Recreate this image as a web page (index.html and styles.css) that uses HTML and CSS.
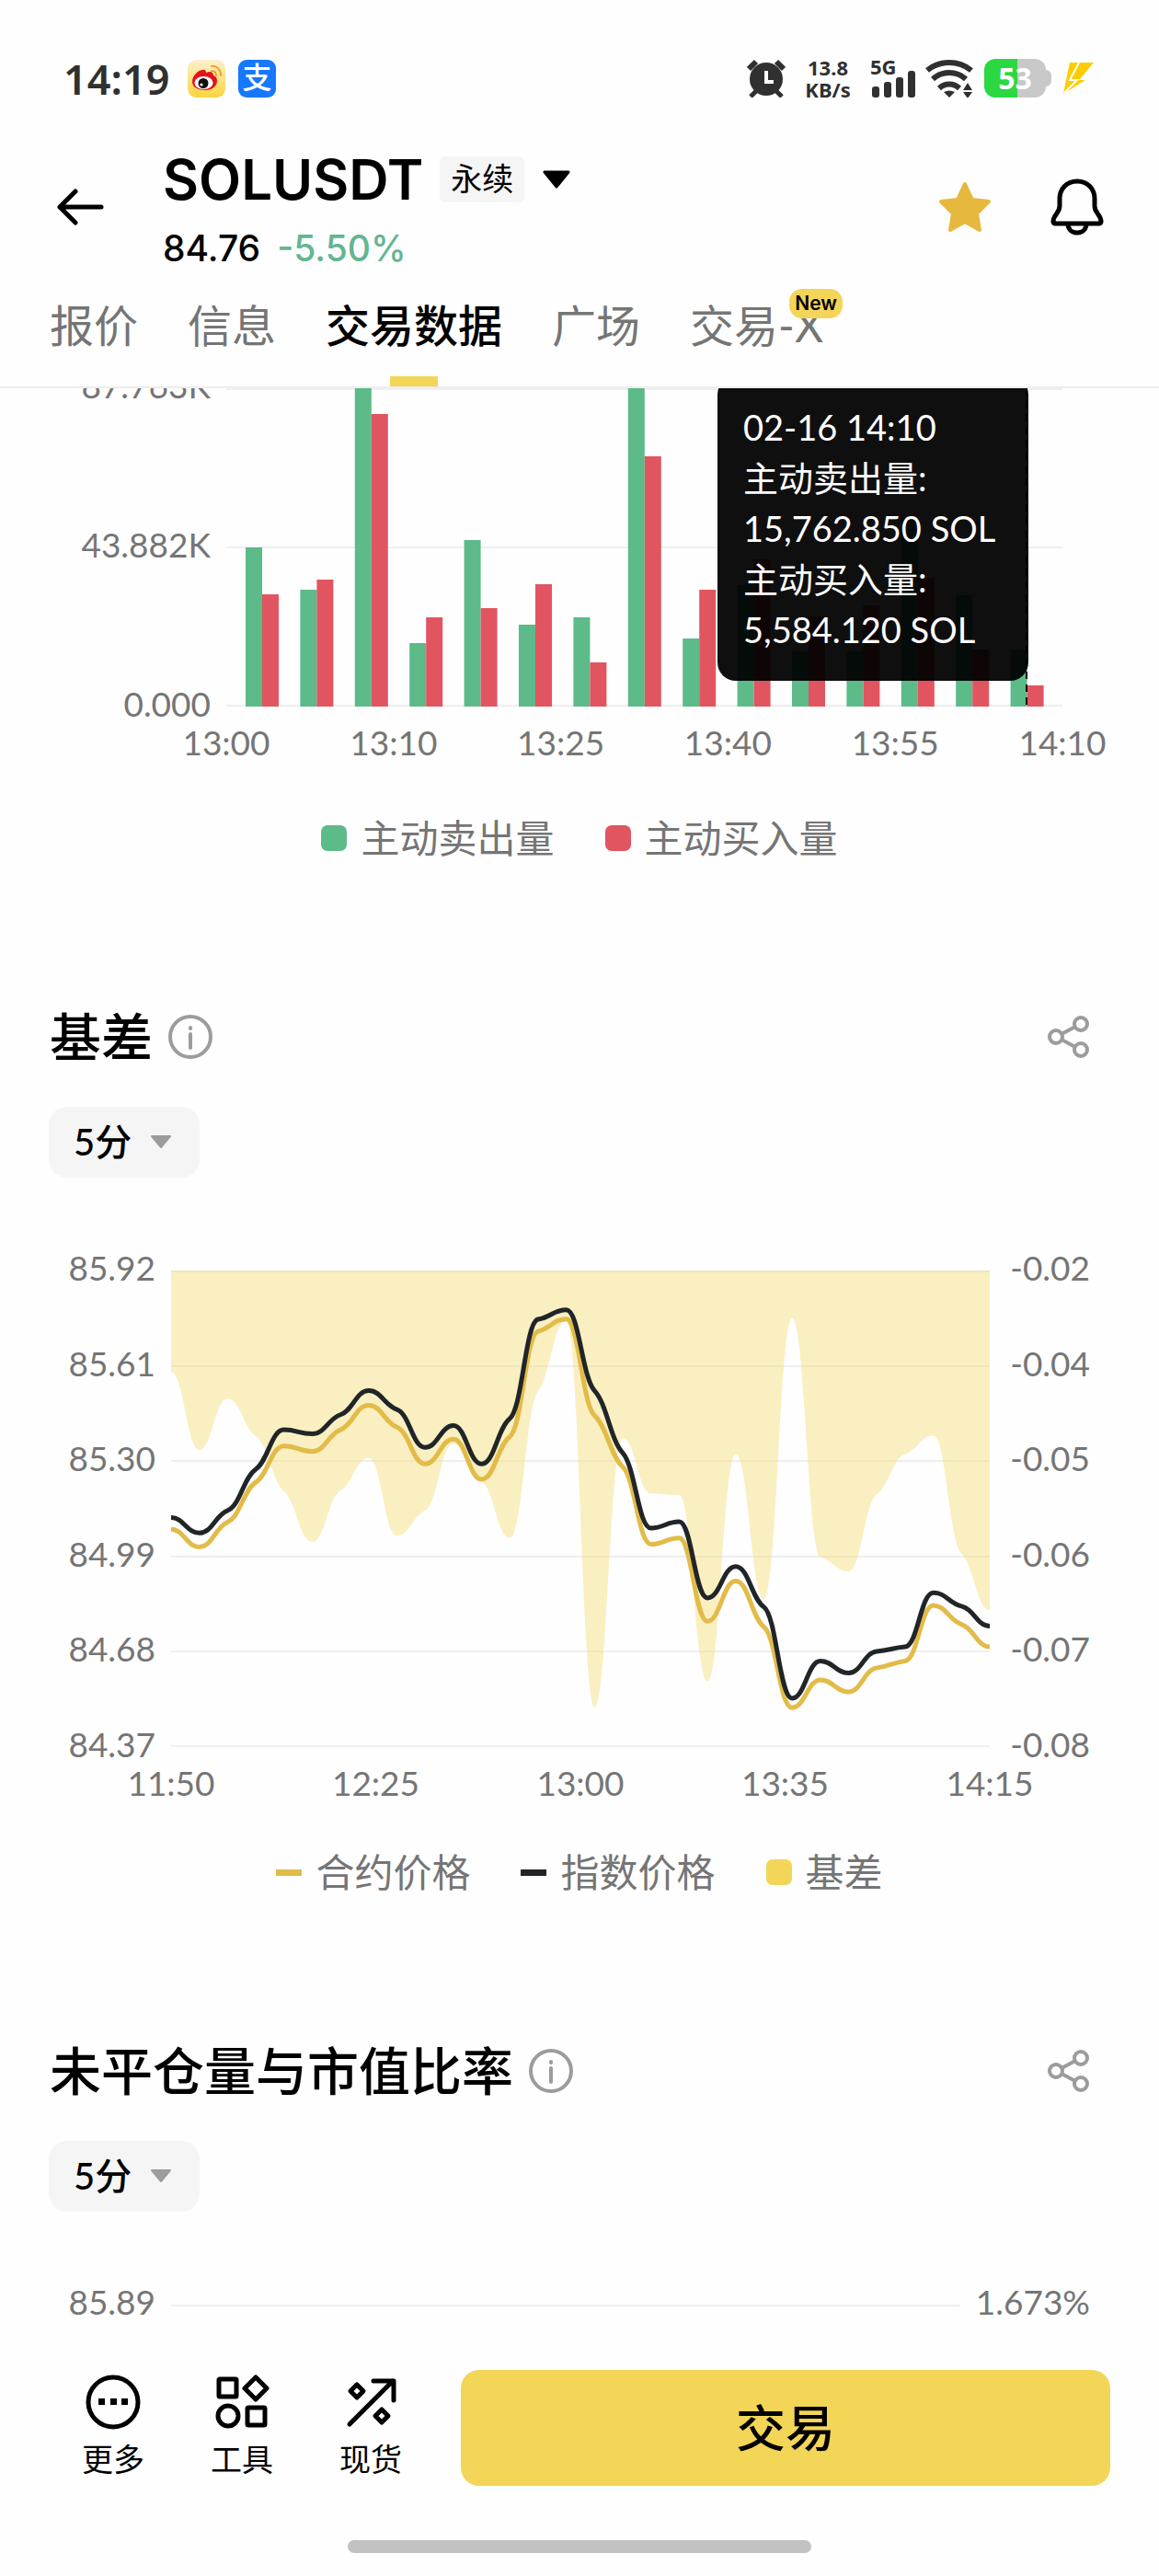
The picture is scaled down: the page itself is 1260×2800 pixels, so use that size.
FILE: index.html
```
<!DOCTYPE html>
<html lang="zh-CN">
<head>
    <meta charset="UTF-8">
    <meta name="viewport" content="width=device-width, initial-scale=1.0">
    <title>SOLUSDT 永续</title>
    <link rel="stylesheet" href="styles.css">
</head>
<body>
    <div class="status-bar">
        <span class="clock">14:19</span>
        <svg class="app-icon" viewBox="0 0 41 41" width="41" height="41">
            <defs>
                <linearGradient id="weiboBg" x1="0" y1="0" x2="0" y2="1">
                    <stop offset="0" stop-color="#fdf0cf"/>
                    <stop offset="1" stop-color="#fbd53c"/>
                </linearGradient>
            </defs>
            <rect width="41" height="41" rx="9" fill="url(#weiboBg)"/>
            <path d="M5 24c0-6 5-12 11-13 3-1 4 1 4 3 4-2 8-1 8 3 3 1 4 3 4 6 0 6-6 10-13 10S5 30 5 24z" fill="#e1141d"/>
            <ellipse cx="17.500" cy="25" rx="10" ry="7" fill="#fff"/>
            <circle cx="17" cy="25.500" r="5.500" fill="#111"/>
            <circle cx="15" cy="27" r="1.600" fill="#fff"/>
            <path d="M26 12c3 0 5 2 5 5M26 7c6-1 10 4 10 10" fill="none" stroke="#eea02a" stroke-width="2" stroke-linecap="round"/>
        </svg>
        <span class="app-icon app-pay">支</span>
        <div class="status-right">
            <svg viewBox="0 0 42 42" width="42" height="42">
                <g stroke="#303030" fill="none">
                    <path d="M2 11l8-8M40 11l-8-8" stroke-width="6"/>
                    <path d="M4 41l8-8M38 41l-8-8" stroke-width="5"/>
                </g>
                <circle cx="21" cy="22" r="18" fill="#303030"/>
                <path d="M21 13v12h8" stroke="#fff" stroke-width="4" fill="none"/>
            </svg>
            <span class="net">13.8<br>KB/s</span>
            <svg class="signal" viewBox="0 0 50 42" width="50" height="42" fill="#303030">
                <text x="0" y="17">5G</text>
                <rect x="2" y="30" width="8" height="12" rx="3"/>
                <rect x="15" y="25" width="8" height="17" rx="3"/>
                <rect x="28" y="20" width="8" height="22" rx="3"/>
                <rect x="41" y="13" width="8" height="29" rx="3"/>
            </svg>
            <svg viewBox="0 0 54 42" width="54" height="42">
                <g fill="none" stroke="#303030" stroke-width="6">
                    <path d="M2 12.500a38 38 0 0 1 48 0"/>
                    <path d="M8 22a27 27 0 0 1 36 0"/>
                    <path d="M15 32a16 16 0 0 1 22 0"/>
                </g>
                <path d="M39 44V25h14v19z" fill="#fefefe"/>
                <path d="M20 36q6-3 12 0l-6 6zM41 34l5-8 5 8zM41 36l5 7 5-7z" fill="#303030"/>
            </svg>
            <span class="battery">53</span>
            <svg viewBox="0 0 35 34" width="35" height="34">
                <path d="M8 0h26L18 19h7L1 34l3-15z" fill="#fc0"/>
                <path d="M18 0L8 19h8L2 33" fill="none" stroke="#fff" stroke-width="2"/>
            </svg>
        </div>
    </div>

    <header class="header">
        <button class="icon-button" aria-label="返回">
            <svg viewBox="0 0 51 40" width="51" height="40">
                <path d="M48 20H3M20 3L3 20l17 17" fill="none" stroke="#000" stroke-width="5" stroke-linecap="round" stroke-linejoin="round"/>
            </svg>
        </button>
        <div class="pair">
            <div class="pair-row">
                <h1>SOLUSDT</h1>
                <span class="tag">永续</span>
                <svg viewBox="0 0 30 20" width="30" height="20"><path d="M2 2h26L15 18z" stroke="#000" stroke-width="3" stroke-linejoin="round"/></svg>
            </div>
            <div class="price-row">
                <span>84.76</span>
                <span class="change">-5.50%</span>
            </div>
        </div>
        <button class="icon-button" aria-label="收藏">
            <svg viewBox="0 0 58 58" width="58" height="58">
                <path d="M29 4l8 17 18 2-13 13 3 18-16-9-16 9 3-18L3 23l18-2z" fill="#e6b93e" stroke="#e6b93e" stroke-width="4" stroke-linejoin="round"/>
            </svg>
        </button>
        <button class="icon-button" aria-label="提醒">
            <svg viewBox="0 0 58 62" width="58" height="62">
                <g fill="none" stroke="#000" stroke-width="5" stroke-linejoin="round">
                    <path d="M29 3C17 3 10 12 10 22v8c0 8-7 9-7 17 0 1 1 2 2 2h48c1 0 2-1 2-2 0-8-7-9-7-17v-8C48 12 41 3 29 3z"/>
                    <path d="M19 49c0 6 4 10 10 10s10-4 10-10"/>
                </g>
            </svg>
        </button>
    </header>

    <nav class="tabs">
        <a href="#">报价</a>
        <a href="#">信息</a>
        <a href="#" class="active">交易数据</a>
        <a href="#">广场</a>
        <a href="#">交易-X<span class="badge">New</span></a>
    </nav>

    <main class="content">
        <section>
            <div class="chart chart-volume">
                <div class="axis axis-left">
                    <span>87.763K</span><span>43.882K</span><span>0.000</span>
                </div>
                <div class="plot">
                    <div class="grid"><i></i><i></i><i></i></div>
                    <svg class="layer" id="volumeChart" viewBox="0 0 909 346" preserveAspectRatio="none"></svg>
                    <div class="tooltip">
                        02-16 14:10<br>
                        主动卖出量:<br>
                        15,762.850 SOL<br>
                        主动买入量:<br>
                        5,584.120 SOL
                    </div>
                </div>
                <div class="axis-x">
                    <span>13:00</span><span>13:10</span><span>13:25</span><span>13:40</span><span>13:55</span><span>14:10</span>
                </div>
            </div>
            <div class="legend">
                <span><i class="swatch green"></i>主动卖出量</span>
                <span><i class="swatch red"></i>主动买入量</span>
            </div>
        </section>

        <section class="section">
            <div class="section-head">
                <h2>基差</h2>
                <svg class="info" viewBox="0 0 48 48" width="48" height="48">
                    <circle cx="24" cy="24" r="22"/>
                    <path d="M24 21v15M24 14v1"/>
                </svg>
                <button class="icon-button share" aria-label="分享">
                    <svg viewBox="0 0 46 46" width="46" height="46">
                        <circle cx="9" cy="23" r="7"/><circle cx="36" cy="9" r="7"/><circle cx="36" cy="37" r="7"/>
                        <path d="M15 20l15-8M15 26l15 8"/>
                    </svg>
                </button>
            </div>
            <div class="period">
                <select aria-label="基差周期"><option>5分</option></select>
                <svg viewBox="0 0 24 16" width="24" height="16"><path d="M2 2h20L12 14z"/></svg>
            </div>
            <div class="chart chart-basis">
                <div class="axis axis-left">
                    <span>85.92</span><span>85.61</span><span>85.30</span><span>84.99</span><span>84.68</span><span>84.37</span>
                </div>
                <div class="plot">
                    <div class="grid"><i></i><i></i><i></i><i></i><i></i><i></i></div>
                    <svg class="layer" id="basisChart" viewBox="0 0 890 518" preserveAspectRatio="none"></svg>
                </div>
                <div class="axis axis-right">
                    <span>-0.02</span><span>-0.04</span><span>-0.05</span><span>-0.06</span><span>-0.07</span><span>-0.08</span>
                </div>
                <div class="axis-x">
                    <span>11:50</span><span>12:25</span><span>13:00</span><span>13:35</span><span>14:15</span>
                </div>
            </div>
            <div class="legend">
                <span><i class="dash gold"></i>合约价格</span>
                <span><i class="dash dark"></i>指数价格</span>
                <span><i class="swatch yellow"></i>基差</span>
            </div>
        </section>

        <section class="section">
            <div class="section-head">
                <h2>未平仓量与市值比率</h2>
                <svg class="info" viewBox="0 0 48 48" width="48" height="48">
                    <circle cx="24" cy="24" r="22"/>
                    <path d="M24 21v15M24 14v1"/>
                </svg>
                <button class="icon-button share" aria-label="分享">
                    <svg viewBox="0 0 46 46" width="46" height="46">
                        <circle cx="9" cy="23" r="7"/><circle cx="36" cy="9" r="7"/><circle cx="36" cy="37" r="7"/>
                        <path d="M15 20l15-8M15 26l15 8"/>
                    </svg>
                </button>
            </div>
            <div class="period">
                <select aria-label="比率周期"><option>5分</option></select>
                <svg viewBox="0 0 24 16" width="24" height="16"><path d="M2 2h20L12 14z"/></svg>
            </div>
            <div class="chart chart-ratio">
                <div class="axis axis-left"><span>85.89</span></div>
                <div class="plot"><div class="grid"><i></i></div></div>
                <div class="axis axis-right"><span>1.673%</span></div>
            </div>
        </section>
    </main>

    <footer class="bottom-bar">
        <div class="actions">
            <a href="#" class="action">
                <svg viewBox="0 0 60 60" width="60" height="60">
                    <circle cx="30" cy="30" r="27"/>
                    <path class="solid" d="M14 26h7v7h-7zM27 26h7v7h-7zM39 26h7v7h-7z"/>
                </svg>
                更多
            </a>
            <a href="#" class="action">
                <svg viewBox="0 0 60 60" width="60" height="60">
                    <rect x="5" y="5" width="19" height="19" rx="1"/>
                    <path d="M45 3l12 12-12 12-12-12z"/>
                    <circle cx="15" cy="45" r="11"/>
                    <rect x="36" y="36" width="19" height="19" rx="1"/>
                </svg>
                工具
            </a>
            <a href="#" class="action">
                <svg viewBox="0 0 60 60" width="60" height="60">
                    <path d="M7 54L54 7M33 7h22v21"/>
                    <path d="M15 11l7 7-7 7-7-7zM42 38l7 7-7 7-7-7z"/>
                </svg>
                现货
            </a>
            <button class="trade">交易</button>
        </div>
        <div class="home-indicator"></div>
    </footer>

    <script src="charts.js"></script>
</body>
</html>
```
FILE: styles.css
```
* {
    box-sizing: border-box;
}
body {
    margin: 0;
    height: 100vh;
    display: flex;
    flex-direction: column;
    overflow: hidden;
    background-color: #fefefe;
    color: #000;
    font-family: Lato, "Noto Sans CJK SC", sans-serif;
}
svg {
    display: block;
    flex: none;
}
a {
    color: inherit;
    text-decoration: none;
}
h1, h2 {
    margin: 0;
}
button {
    font-family: inherit;
    border: none;
    cursor: pointer;
}
.icon-button {
    padding: 0;
    background: none;
}

/* status bar */
.status-bar {
    display: flex;
    align-items: center;
    height: 150px;
    padding: 20px 70px 0 69px;
    color: #303030;
}
.clock {
    width: 135px;
    font-size: 45px;
    font-weight: 600;
    font-family: "Noto Sans", sans-serif;
}
.app-icon {
    width: 41px;
    height: 41px;
    margin-right: 14px;
    border-radius: 9px;
}
.app-pay {
    background-color: #1677ff;
    color: #fff;
    font-size: 32px;
    font-weight: 500;
    line-height: 38px;
    text-align: center;
}
.status-right {
    display: flex;
    align-items: center;
    gap: 10px;
    margin-left: auto;
}
.net {
    width: 52px;
    margin: 0 10px;
    font-family: "Noto Sans", sans-serif;
    font-size: 22px;
    font-weight: 700;
    line-height: 24px;
    text-align: center;
}
.signal {
    overflow: visible;
}
.signal text {
    font-family: "Noto Sans", sans-serif;
    font-size: 22px;
    font-weight: 700;
}
.battery {
    position: relative;
    width: 67px;
    height: 42px;
    margin-right: 8px;
    border-radius: 12px;
    background: linear-gradient(to right, #2bd841 54%, #c8c8c8 54%);
    color: #fff;
    font-family: "Noto Sans", sans-serif;
    font-size: 32px;
    font-weight: 700;
    line-height: 42px;
    text-align: center;
}
.battery::after {
    content: "";
    position: absolute;
    top: 12px;
    right: -6px;
    width: 7px;
    height: 18px;
    border-radius: 0 6px 6px 0;
    background-color: #c8c8c8;
}

/* header */
.header {
    display: flex;
    align-items: center;
    gap: 64px;
    height: 150px;
    padding: 0 60px 0 62px;
}
.pair {
    flex: 1;
    padding-top: 10px;
    font-family: Inter, "Noto Sans CJK SC", sans-serif;
}
.pair-row {
    display: flex;
    align-items: center;
    gap: 18px;
    height: 60px;
}
.pair-row h1 {
    font-size: 60px;
    font-weight: 600;
    line-height: 60px;
}
.tag {
    margin-right: 2px;
    padding: 0 12px;
    border-radius: 6px;
    background-color: #f5f5f5;
    font-size: 34px;
    line-height: 50px;
}
.price-row {
    display: flex;
    gap: 18px;
    margin-top: 20px;
    font-size: 39px;
    font-weight: 500;
    line-height: 50px;
}
.change {
    color: #65b591;
}

/* tabs */
.tabs {
    display: flex;
    gap: 54px;
    height: 122px;
    padding: 0 54px;
    border-bottom: 2px solid #ededed;
    color: #757575;
    font-size: 48px;
    line-height: 108px;
}
.tabs a {
    position: relative;
}
.tabs .active {
    color: #000;
    font-weight: 500;
}
.tabs .active::after {
    content: "";
    position: absolute;
    bottom: 0;
    left: 50%;
    width: 52px;
    height: 11px;
    margin-left: -26px;
    background-color: #f3d557;
}
.badge {
    position: absolute;
    top: 14px;
    left: 108px;
    width: 58px;
    border-radius: 14px;
    background-color: #f3d557;
    color: #000;
    font-family: Inter, sans-serif;
    font-size: 21px;
    font-weight: 600;
    line-height: 32px;
    text-align: center;
}

/* content */
.content {
    flex: 1;
    min-height: 0;
    overflow: hidden;
}
.section {
    margin-top: 146px;
}
.section-head {
    display: flex;
    align-items: center;
    gap: 17px;
    height: 80px;
    padding: 0 75px 0 54px;
}
.section-head h2 {
    font-size: 56px;
    font-weight: 500;
    line-height: 80px;
}
.info {
    fill: none;
    stroke: #9c9c9c;
    stroke-width: 4;
    stroke-linecap: round;
}
.share {
    margin-left: auto;
}
.share svg {
    fill: none;
    stroke: #9c9c9c;
    stroke-width: 4;
}
.period {
    position: relative;
    width: 164px;
    margin: 36px 0 0 53px;
}
.period select {
    appearance: none;
    width: 100%;
    height: 77px;
    padding: 0 27px 2px;
    border: none;
    border-radius: 20px;
    background-color: #f5f5f5;
    color: #000;
    font-family: inherit;
    font-size: 40px;
    font-weight: 500;
}
.period svg {
    position: absolute;
    top: 30px;
    right: 30px;
    fill: #9c9c9c;
    stroke: #9c9c9c;
    stroke-width: 2;
    stroke-linejoin: round;
    pointer-events: none;
}

/* charts */
.chart {
    display: grid;
    column-gap: 17px;
    color: #757575;
    font-size: 37px;
}
.chart-volume {
    grid-template: 346px auto / 229px 1fr;
    padding: 0 105px 7px 0;
}
.chart-basis {
    grid-template: 518px auto / 169px 1fr 92px;
    margin-top: 101px;
    padding-right: 75px;
}
.chart-ratio {
    grid-template: 518px auto / 169px 1fr auto;
    margin-top: 101px;
    padding-right: 75px;
}
.axis {
    display: flex;
    flex-direction: column;
    justify-content: space-between;
    margin: -23px 0 -17px;
    line-height: 40px;
    text-align: right;
}
.plot {
    position: relative;
}
.grid {
    display: flex;
    flex-direction: column;
    justify-content: space-between;
    height: 100%;
}
.grid i {
    height: 2px;
    background-color: #efefef;
}
.layer {
    position: absolute;
    top: 0;
    left: 0;
    width: 100%;
    height: 100%;
}
.axis-x {
    grid-column: 2;
    display: flex;
    justify-content: space-between;
    margin: 14px -60px 0;
    line-height: 50px;
}
.axis-x span {
    width: 120px;
    text-align: center;
}
.tooltip {
    position: absolute;
    right: 37px;
    bottom: 28px;
    width: 338px;
    padding: 28px;
    border-radius: 20px;
    background-color: rgba(0, 0, 0, 0.94);
    color: #fff;
    font-size: 38px;
    line-height: 55px;
    white-space: nowrap;
}
.sell {
    fill: #5dba89;
}
.buy {
    fill: #e15561;
}
.pointer {
    stroke: #000;
    stroke-width: 2;
    stroke-dasharray: 8 6;
}
.basis-area {
    fill: #f3d557;
    fill-opacity: 0.36;
}
.line {
    fill: none;
    stroke-width: 5;
    stroke-linejoin: round;
    vector-effect: non-scaling-stroke;
}
.line-contract {
    stroke: #e2bb48;
}
.line-index {
    stroke: #202528;
}

/* legend */
.legend {
    display: flex;
    justify-content: center;
    gap: 55px;
    margin-top: 42px;
    color: #757575;
    font-size: 42px;
    line-height: 60px;
}
.legend span {
    display: flex;
    align-items: center;
    gap: 15px;
}
.swatch {
    width: 28px;
    height: 28px;
    border-radius: 7px;
}
.dash {
    width: 28px;
    height: 7px;
}
.green {
    background-color: #5dba89;
}
.red {
    background-color: #e15561;
}
.yellow {
    background-color: #f3d557;
}
.gold {
    background-color: #e2bb48;
}
.dark {
    background-color: #202528;
}

/* bottom bar */
.bottom-bar {
    position: relative;
    padding: 26px 0 25px;
    background-color: #fefefe;
}
.actions {
    display: flex;
    align-items: center;
    padding: 0 53px;
}
.action {
    display: flex;
    flex-direction: column;
    align-items: center;
    gap: 8px;
    width: 140px;
    font-size: 34px;
    line-height: 48px;
}
.action svg {
    fill: none;
    stroke: #000;
    stroke-width: 5;
    stroke-linecap: round;
    stroke-linejoin: round;
}
.action .solid {
    fill: #000;
    stroke: none;
}
.trade {
    flex: 1;
    height: 126px;
    margin-left: 28px;
    padding-bottom: 6px;
    border-radius: 20px;
    background-color: #f3d557;
    color: #000;
    font-size: 54px;
    font-weight: 500;
}
.home-indicator {
    width: 40%;
    height: 14px;
    margin: 59px auto 0;
    border-radius: 7px;
    background-color: #c2c2c2;
}
```
FILE: charts.js
```
const SVG_NS = 'http://www.w3.org/2000/svg';

function add(parent, tag, attrs) {
    const el = document.createElementNS(SVG_NS, tag);
    for (const key in attrs) {
        el.setAttribute(key, attrs[key]);
    }
    parent.appendChild(el);
}

// Volume bars: [sell, buy], height above the zero line
const volume = [
    [173, 122], [127, 138], [350, 318], [69, 97], [181, 107],
    [89, 133], [97, 48], [350, 272], [74, 127], [132, 160],
    [60, 98], [60, 110], [203, 140], [121, 62], [62, 23]
];
const volumeChart = document.getElementById('volumeChart');
const barWidth = 18;
volume.forEach(([sell, buy], i) => {
    const x = 21 + i * 59.4;
    add(volumeChart, 'rect', { class: 'sell', x: x, y: 346 - sell, width: barWidth, height: sell });
    add(volumeChart, 'rect', { class: 'buy', x: x + barWidth, y: 346 - buy, width: barWidth, height: buy });
});
add(volumeChart, 'line', { class: 'pointer', x1: 870, x2: 870, y1: 0, y2: 346 });

// Basis chart: distance below the top gridline, full scale = 1269
const indexPrice = [658, 699, 639, 529, 424, 435, 384, 320, 370, 471, 413, 515, 394, 130, 105, 320, 486, 686, 669, 872, 788, 896, 1139, 1040, 1072, 1014, 1002, 858, 894, 947];
const contractPrice = [689, 736, 670, 564, 467, 482, 424, 359, 417, 515, 449, 556, 442, 162, 129, 386, 523, 729, 712, 934, 827, 949, 1164, 1090, 1122, 1058, 1040, 892, 942, 1002];
const basis = [271, 478, 341, 441, 588, 722, 586, 499, 706, 639, 461, 561, 712, 321, 134, 1163, 447, 594, 598, 1094, 489, 875, 127, 763, 801, 596, 489, 439, 754, 904];

const WIDTH = 890;
const HEIGHT = 518;

// Smooth curve, nearly level at every point so it never overshoots
function curve(values) {
    const step = WIDTH / (values.length - 1);
    const handle = step * 0.45;
    const y = values.map(v => v / 1269 * HEIGHT);
    const slope = y.map((v, i) => {
        const a = v - y[i - 1];
        const b = y[i + 1] - v;
        if (!(a * b > 0)) return 0;
        return Math.sign(a) * Math.min(Math.abs(a), Math.abs(b)) / step * 0.5;
    });
    let d = 'M0,' + y[0];
    for (let i = 1; i < y.length; i++) {
        const x0 = (i - 1) * step;
        const x1 = i * step;
        d += `C${x0 + handle},${y[i - 1] + slope[i - 1] * handle} ${x1 - handle},${y[i] - slope[i] * handle} ${x1},${y[i]}`;
    }
    return d;
}

const basisChart = document.getElementById('basisChart');
add(basisChart, 'path', { class: 'basis-area', d: curve(basis) + 'V0H0Z' });
add(basisChart, 'path', { class: 'line line-contract', d: curve(contractPrice) });
add(basisChart, 'path', { class: 'line line-index', d: curve(indexPrice) });
```
